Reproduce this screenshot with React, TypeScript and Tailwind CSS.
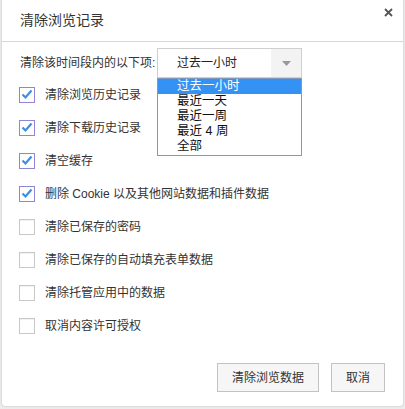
import React from 'react';

const font = { fontFamily: '"Liberation Sans", "Noto Sans CJK SC", sans-serif' };

const items = [
  { label: '清除浏览历史记录', checked: true },
  { label: '清除下载历史记录', checked: true },
  { label: '清空缓存', checked: true },
  { label: '删除 Cookie 以及其他网站数据和插件数据', checked: true },
  { label: '清除已保存的密码', checked: false },
  { label: '清除已保存的自动填充表单数据', checked: false },
  { label: '清除托管应用中的数据', checked: false },
  { label: '取消内容许可授权', checked: false },
];

const options = ['过去一小时', '最近一天', '最近一周', '最近 4 周', '全部'];

function Checkbox({ checked }: { checked: boolean }) {
  if (checked) {
    return (
      <div className="w-[16px] h-[16px] border border-[#8f86d4] bg-white flex items-center justify-center shrink-0">
        <svg width="12" height="11" viewBox="0 0 12 11">
          <path d="M1.5 5.5 L4.5 8.5 L10.5 1.5" fill="none" stroke="#3d8de3" strokeWidth="2.2" />
        </svg>
      </div>
    );
  }
  return <div className="w-[16px] h-[16px] border border-[#c8c8c8] bg-white shrink-0 shadow-[inset_0_1px_1px_rgba(0,0,0,0.06)]" />;
}

export default function App() {
  return (
    <div className="w-[405px] h-[409px] bg-[#ececec] pl-[2px] pr-[2px] pb-[3px]" style={font}>
      <div className="relative h-full bg-white rounded-b-[3px] shadow-[0_0_2px_rgba(0,0,0,0.25)] text-[#333] flex flex-col">
        {/* header */}
        <div className="h-[42px] flex items-center justify-between pl-[18px] pr-[10px] border-b border-[#d6d6d6]">
          <span className="text-[14px] text-[#333]">清除浏览记录</span>
          <svg width="9" height="9" viewBox="0 0 9 9" className="mb-[16px]">
            <path d="M1 1 L8 8 M8 1 L1 8" stroke="#555" strokeWidth="1.8" />
          </svg>
        </div>

        {/* range row */}
        <div className="flex items-center pl-[18px] mt-[6px] h-[30px] text-[12px]">
          <span className="w-[137px]">清除该时间段内的以下项:</span>
          <div className="relative w-[145px] h-[30px] border border-[#cfcfcf] flex">
            <div className="flex-1 flex items-center pl-[19px] text-[12px] text-[#222]">过去一小时</div>
            <div className="w-[30px] bg-[#f3f3f3] flex items-center justify-center">
              <svg width="9" height="5" viewBox="0 0 9 5">
                <path d="M0 0 L9 0 L4.5 5 Z" fill="#9a9a9a" />
              </svg>
            </div>
            {/* open list */}
            <div className="absolute left-[-1px] top-[29px] w-[145px] border border-[#7f9bbd] bg-white z-10">
              {options.map((o, i) => (
                <div
                  key={o}
                  className={
                    'h-[15px] leading-[15px] pl-[19px] text-[12.5px] ' +
                    (i === 0 ? 'bg-[#3492f5] text-white' : 'text-[#111]')
                  }
                >
                  {o}
                </div>
              ))}
              <div className="h-[1px]" />
            </div>
          </div>
        </div>

        {/* checkboxes */}
        <div className="flex flex-col">
          {items.map((it) => (
            <div key={it.label} className="h-[33px] flex items-center pl-[17px] gap-[10px] text-[12px]">
              <Checkbox checked={it.checked} />
              <span>{it.label}</span>
            </div>
          ))}
        </div>

        {/* buttons */}
        <div className="flex justify-end gap-[12px] pr-[18px] mt-[21px]">
          <button className="w-[102px] h-[29px] border border-[#c2c2c2] bg-[#f6f6f6] text-[12px] text-[#333]">
            清除浏览数据
          </button>
          <button className="w-[54px] h-[29px] border border-[#c2c2c2] bg-[#f6f6f6] text-[12px] text-[#333]">
            取消
          </button>
        </div>
      </div>
    </div>
  );
}
